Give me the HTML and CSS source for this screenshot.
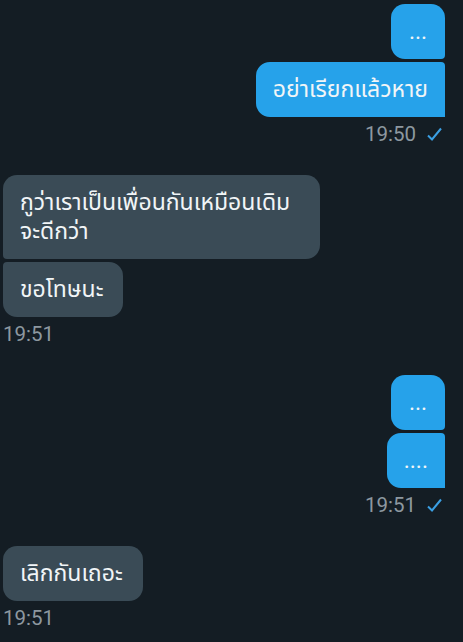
FILE: index.html
```html
<!DOCTYPE html>
<html lang="th">
<head>
    <meta charset="UTF-8">
    <meta name="viewport" content="width=device-width, initial-scale=1.0">
    <title>Chat</title>
    <link rel="stylesheet" href="styles.css">
</head>
<body>
    <div class="chat">
        <div class="group out">
            <div class="bubble first">...</div>
            <div class="bubble last">อย่าเรียกแล้วหาย</div>
            <div class="time">19:50
                <svg class="tick" width="15" height="14" viewBox="0 0 15 14"><path d="M1 8.5 L5 12.5 L14 1.5" fill="none" stroke="#3a9fe3" stroke-width="2"/></svg>
            </div>
        </div>

        <div class="group in">
            <div class="bubble first wide">กูว่าเราเป็นเพื่อนกันเหมือนเดิม<br>จะดีกว่า</div>
            <div class="bubble last">ขอโทษนะ</div>
            <div class="time">19:51</div>
        </div>

        <div class="group out">
            <div class="bubble first">...</div>
            <div class="bubble last">....</div>
            <div class="time">19:51
                <svg class="tick" width="15" height="14" viewBox="0 0 15 14"><path d="M1 8.5 L5 12.5 L14 1.5" fill="none" stroke="#3a9fe3" stroke-width="2"/></svg>
            </div>
        </div>

        <div class="group in">
            <div class="bubble single">เลิกกันเถอะ</div>
            <div class="time">19:51</div>
        </div>
    </div>
</body>
</html>
```

FILE: styles.css
```css
html, body {
    margin: 0;
    background: #141d24;
}
body {
    font-family: Roboto, "Noto Sans", "Noto Sans Thai", sans-serif;
    color: #f1f5f7;
}
.chat {
    display: flex;
    flex-direction: column;
    gap: 29px;
    padding: 4px 18px 0 3px;
}
.group {
    display: flex;
    flex-direction: column;
    gap: 3px;
}
.group.out {
    align-items: flex-end;
}
.group.in {
    align-items: flex-start;
}
.bubble {
    font-size: 23px;
    line-height: 29px;
    padding: 13px 17px;
    border-radius: 14px;
}
.bubble.wide {
    padding-right: 30px;
}
.out .bubble {
    background: #26a2ea;
    min-width: 20px;
    text-align: center;
}
.out .first {
    border-bottom-right-radius: 4px;
}
.out .last {
    border-top-right-radius: 4px;
    border-bottom-right-radius: 0;
}
.in .bubble {
    background: #3a4b56;
    padding-right: 20px;
}
.in .first {
    border-bottom-left-radius: 4px;
}
.in .last {
    border-top-left-radius: 4px;
}
.in .bubble.wide {
    padding-right: 30px;
}
.time {
    display: flex;
    align-items: center;
    gap: 11px;
    margin-top: 2px;
    font-size: 20.5px;
    line-height: 24px;
    color: #8d98a0;
}
.out .time {
    padding-right: 3px;
}
.tick {
    display: block;
}
```
